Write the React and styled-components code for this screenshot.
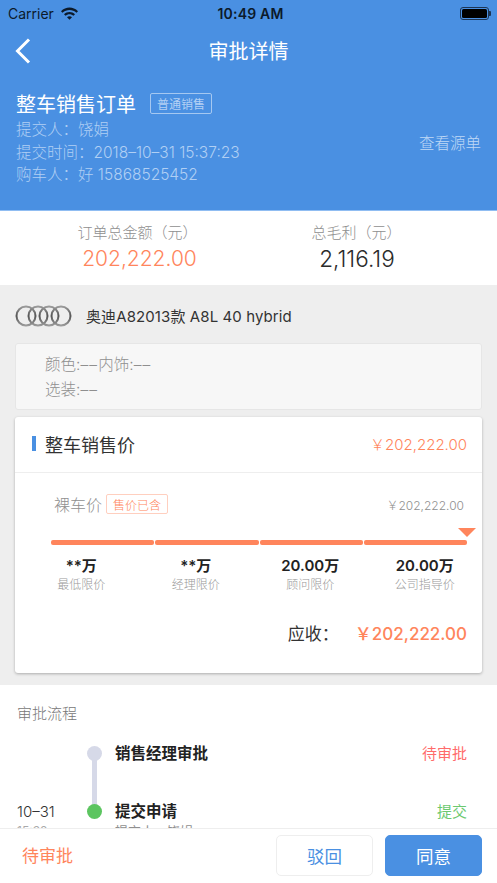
import styled, { createGlobalStyle } from 'styled-components';

const GlobalStyle = createGlobalStyle`
  html, body {
    margin: 0;
    padding: 0;
    background: #fff;
  }
  body {
    font-family: Inter, "Noto Sans CJK SC", sans-serif;
  }
  * {
    box-sizing: border-box;
  }
`;

const Page = styled.div`
  width: 497px;
  height: 883px;
  display: flex;
  flex-direction: column;
  overflow: hidden;
`;

const Header = styled.header`
  height: 211px;
  flex: none;
  background: #4a90e2;
  border-bottom: 1px solid #90bdf2;
  color: #fff;
`;

const StatusBar = styled.div`
  height: 26px;
  padding: 0 8px;
  display: grid;
  grid-template-columns: 1fr auto 1fr;
  align-items: center;
  color: #0c1a2b;
  font-size: 14px;
`;

const Carrier = styled.div`
  display: flex;
  align-items: center;
  gap: 7px;
`;

const Clock = styled.div`
  font-weight: 600;
  font-size: 14px;
  letter-spacing: 0.2px;
  margin-left: 4px;
`;

const Battery = styled.div`
  justify-self: end;
  width: 29px;
  height: 13px;
  border: 1px solid #1c3555;
  border-radius: 3px;
  padding: 1px;
  position: relative;

  &::before {
    content: '';
    display: block;
    height: 100%;
    background: #000;
    border-radius: 1.5px;
  }

  &::after {
    content: '';
    position: absolute;
    right: -3px;
    top: 3px;
    width: 2px;
    height: 5px;
    background: #1c3555;
    border-radius: 0 1px 1px 0;
  }
`;

const NavBar = styled.nav`
  height: 48px;
  display: flex;
  align-items: center;
  justify-content: center;
  position: relative;
`;

const BackIcon = styled.svg`
  position: absolute;
  left: 15px;
  top: 12px;
`;

const NavTitle = styled.h1`
  margin: 0;
  font-size: 20px;
  font-weight: 400;
`;

const OrderInfo = styled.div`
  padding: 16px 16px 0;
  display: flex;
  align-items: center;
  justify-content: space-between;
`;

const OrderTitleRow = styled.div`
  display: flex;
  align-items: center;
  gap: 14px;
  height: 26px;
  margin-bottom: 3px;
`;

const OrderTitle = styled.h2`
  margin: 0;
  font-size: 20px;
  font-weight: 400;
`;

const TypeTag = styled.span`
  height: 21px;
  padding: 0 6px;
  display: flex;
  align-items: center;
  border: 1px solid #a5c8f1;
  border-radius: 2px;
  font-size: 12px;
  color: #b4d1f4;
`;

const InfoLine = styled.div`
  font-size: 15.5px;
  font-weight: 300;
  line-height: 22.5px;
  color: #b0cff4;
`;

const SourceLink = styled.a`
  font-size: 15.5px;
  font-weight: 300;
  color: #c0d9f6;
  margin-top: 8px;
`;

const Stats = styled.section`
  height: 74px;
  flex: none;
  background: #fff;
  display: grid;
  grid-template-columns: 280px 1fr;
  padding: 10px 0 0 0;
`;

const Stat = styled.div`
  text-align: center;
  padding-right: ${({ $shift }) => $shift}px;
`;

const StatLabel = styled.div`
  font-size: 15px;
  font-weight: 300;
  line-height: 24px;
  color: #8f8f8f;
`;

const StatValue = styled.div`
  font-size: ${({ $accent }) => ($accent ? '21px' : '22.5px')};
  font-weight: 300;
  line-height: 28px;
  padding-left: ${({ $accent }) => ($accent ? '4px' : '1px')};
  color: ${({ $accent }) => ($accent ? '#ff855c' : '#2b2b2b')};
`;

const GreySection = styled.section`
  height: 400px;
  flex: none;
  background: #eee;
  padding: 0 15px;
`;

const CarRow = styled.div`
  height: 58px;
  display: flex;
  align-items: center;
  gap: 14px;
  padding-top: 3px;
  font-size: 15px;
  letter-spacing: 0.1px;
  color: #333;
`;

const OptionsCard = styled.div`
  height: 67px;
  background: #f7f7f7;
  border: 1px solid #e6e6e6;
  border-radius: 3px;
  padding: 8px 29px;
  font-size: 15.5px;
  font-weight: 300;
  line-height: 25px;
  color: #8f8f8f;
`;

const Blank = styled.span`
  letter-spacing: 1.2px;
`;

const PriceCard = styled.div`
  height: 256px;
  margin-top: 7px;
  background: #fff;
  border-radius: 3px;
  box-shadow: 0 1px 3px rgba(0, 0, 0, 0.28);
`;

const PriceHead = styled.div`
  height: 56px;
  padding: 0 15px 2px 17px;
  display: flex;
  align-items: center;
  justify-content: space-between;
  border-bottom: 1px solid #eee;
`;

const PriceHeadTitle = styled.div`
  display: flex;
  align-items: center;
  gap: 9px;
  font-size: 18px;
  color: #333;

  &::before {
    content: '';
    width: 4px;
    height: 15px;
    background: #4a90e2;
  }
`;

const PriceHeadValue = styled.div`
  font-size: 15px;
  font-weight: 300;
  color: #ff855c;
`;

const PriceBody = styled.div`
  padding: 18px 15px 0 36px;
`;

const BareRow = styled.div`
  height: 26px;
  padding: 0 3px;
  display: flex;
  align-items: center;
  gap: 4px;
`;

const BareLabel = styled.span`
  font-size: 16px;
  font-weight: 300;
  color: #8f8f8f;
`;

const IncludedTag = styled.span`
  height: 20px;
  padding: 0 6px;
  display: flex;
  align-items: center;
  border: 1px solid #ffcfbf;
  border-radius: 2px;
  font-size: 12px;
  font-weight: 300;
  color: #ff855c;
`;

const BareValue = styled.span`
  margin-left: auto;
  font-size: 12px;
  font-weight: 300;
  color: #8f8f8f;
`;

const Track = styled.div`
  position: relative;
  margin-top: 23px;
  display: grid;
  grid-template-columns: repeat(4, 1fr);
  gap: 1px;

  &::after {
    content: '';
    position: absolute;
    right: -9px;
    top: -12px;
    border-left: 9px solid transparent;
    border-right: 9px solid transparent;
    border-top: 9px solid #ff855c;
  }
`;

const Segment = styled.div`
  height: 5px;
  border-radius: 2px;
  background: #ff855c;
`;

const Limits = styled.div`
  margin: 11px -15px 0 -27px;
  display: grid;
  grid-template-columns: repeat(4, 1fr);
  text-align: center;
`;

const LimitValue = styled.div`
  font-size: 15px;
  line-height: 20px;
  font-weight: 600;
  color: #222;
`;

const LimitLabel = styled.div`
  font-size: 12px;
  font-weight: 300;
  line-height: 18px;
  color: #999;
`;

const DueRow = styled.div`
  margin-top: 26px;
  display: flex;
  justify-content: flex-end;
  align-items: center;
  gap: 16px;
`;

const DueLabel = styled.span`
  font-size: 17px;
  color: #333;
`;

const DueValue = styled.span`
  font-size: 17px;
  font-weight: 500;
  color: #ff855c;
`;

const FlowSection = styled.section`
  flex: 1;
  min-height: 0;
  overflow: hidden;
  background: #fff;
  padding: 18px 30px 0 17px;
`;

const FlowTitle = styled.div`
  font-size: 15px;
  font-weight: 300;
  line-height: 22px;
  color: #777;
  margin-bottom: 20px;
`;

const Step = styled.div`
  display: grid;
  grid-template-columns: 58px 18px 1fr auto;
  column-gap: 12px;
  height: 58px;
  position: relative;
`;

const StepDate = styled.div`
  font-size: 15px;
  font-weight: 300;
  line-height: 18px;
  color: #333;
`;

const StepTime = styled.div`
  font-size: 12px;
  line-height: 20px;
  color: #aaa;
`;

const Dot = styled.div`
  width: 15px;
  height: 15px;
  border-radius: 50%;
  margin-top: 1px;
  background: ${({ $color }) => $color};
  z-index: 1;
`;

const StepLine = styled.div`
  position: absolute;
  left: 75px;
  top: 10px;
  width: 5px;
  height: 58px;
  background: #d6d9e8;
`;

const StepName = styled.div`
  font-size: 15.5px;
  line-height: 18px;
  font-weight: 600;
  color: #222;
  margin-left: -2px;
`;

const StepSub = styled.div`
  font-size: 13px;
  line-height: 20px;
  font-weight: 400;
  color: #8f8f8f;
`;

const StepStatus = styled.div`
  font-size: 15px;
  line-height: 18px;
  color: ${({ $color }) => $color};
`;

const BottomBar = styled.footer`
  height: 55px;
  flex: none;
  background: #fff;
  border-top: 1px solid #eee;
  padding: 6px 15px 0 22px;
  display: flex;
  align-items: flex-start;
  gap: 12px;
`;

const BottomStatus = styled.div`
  flex: 1;
  font-size: 17px;
  line-height: 42px;
  color: #ff855c;
`;

const ActionButton = styled.button`
  width: 97px;
  height: 41px;
  border-radius: 5px;
  border: 1px solid ${({ $primary }) => ($primary ? '#4a90e2' : '#eee')};
  background: ${({ $primary }) => ($primary ? '#4a90e2' : '#fff')};
  color: ${({ $primary }) => ($primary ? '#fff' : '#4a90e2')};
  font-family: inherit;
  font-size: 17.5px;
  padding: 0;
`;

const limits = [
  { value: '**万', label: '最低限价' },
  { value: '**万', label: '经理限价' },
  { value: '20.00万', label: '顾问限价' },
  { value: '20.00万', label: '公司指导价' },
];

function AudiLogo() {
  return (
    <svg width="57" height="22" viewBox="0 0 57 22" fill="none" stroke="url(#rings)" strokeWidth="2">
      <defs>
        <linearGradient id="rings" x1="0" y1="0" x2="0" y2="1">
          <stop offset="0" stopColor="#999" />
          <stop offset="0.5" stopColor="#555" />
          <stop offset="1" stopColor="#999" />
        </linearGradient>
      </defs>
      <circle cx="11" cy="11" r="9.5" />
      <circle cx="23" cy="11" r="9.5" />
      <circle cx="34" cy="11" r="9.5" />
      <circle cx="46" cy="11" r="9.5" />
    </svg>
  );
}

export default function App() {
  return (
    <Page>
      <GlobalStyle />
      <Header>
        <StatusBar>
          <Carrier>
            Carrier
            <svg width="17" height="13" viewBox="0 0 17 13" fill="#0c1a2b">
              <path d="M0 4.2C4.7-.6 12.3-.6 17 4.2l-1.5 1.6C11.6 2 5.4 2 1.5 5.8z" />
              <path d="M3 7.2c3-3 8-3 11 0l-1.5 1.6c-2.2-2.1-5.8-2.1-8 0z" />
              <path d="M6 10.2c1.4-1.3 3.6-1.3 5 0l-2.5 2.6z" />
            </svg>
          </Carrier>
          <Clock>10:49 AM</Clock>
          <Battery />
        </StatusBar>
        <NavBar>
          <BackIcon width="16" height="26" viewBox="0 0 16 26" fill="none" stroke="#fff" strokeWidth="3">
            <path d="M14 1.5 2.5 13 14 24.5" />
          </BackIcon>
          <NavTitle>审批详情</NavTitle>
        </NavBar>
        <OrderInfo>
          <div>
            <OrderTitleRow>
              <OrderTitle>整车销售订单</OrderTitle>
              <TypeTag>普通销售</TypeTag>
            </OrderTitleRow>
            <InfoLine>提交人：饶娟</InfoLine>
            <InfoLine>提交时间：2018–10–31 15:37:23</InfoLine>
            <InfoLine>购车人：好 15868525452</InfoLine>
          </div>
          <SourceLink>查看源单</SourceLink>
        </OrderInfo>
      </Header>

      <Stats>
        <Stat $shift={5}>
          <StatLabel>订单总金额（元）</StatLabel>
          <StatValue $accent>202,222.00</StatValue>
        </Stat>
        <Stat $shift={64}>
          <StatLabel>总毛利（元）</StatLabel>
          <StatValue>2,116.19</StatValue>
        </Stat>
      </Stats>

      <GreySection>
        <CarRow>
          <AudiLogo />
          奥迪A82013款 A8L 40 hybrid
        </CarRow>
        <OptionsCard>
          <div>
            颜色:<Blank>––</Blank>内饰:<Blank>––</Blank>
          </div>
          <div>
            选装:<Blank>––</Blank>
          </div>
        </OptionsCard>
        <PriceCard>
          <PriceHead>
            <PriceHeadTitle>整车销售价</PriceHeadTitle>
            <PriceHeadValue>￥202,222.00</PriceHeadValue>
          </PriceHead>
          <PriceBody>
            <BareRow>
              <BareLabel>裸车价</BareLabel>
              <IncludedTag>售价已含</IncludedTag>
              <BareValue>￥202,222.00</BareValue>
            </BareRow>
            <Track>
              {limits.map((item) => (
                <Segment key={item.label} />
              ))}
            </Track>
            <Limits>
              {limits.map((item) => (
                <div key={item.label}>
                  <LimitValue>{item.value}</LimitValue>
                  <LimitLabel>{item.label}</LimitLabel>
                </div>
              ))}
            </Limits>
            <DueRow>
              <DueLabel>应收：</DueLabel>
              <DueValue>￥202,222.00</DueValue>
            </DueRow>
          </PriceBody>
        </PriceCard>
      </GreySection>

      <FlowSection>
        <FlowTitle>审批流程</FlowTitle>
        <Step>
          <div />
          <Dot $color="#d6d9e8" />
          <StepName>销售经理审批</StepName>
          <StepStatus $color="#ff6b6b">待审批</StepStatus>
          <StepLine />
        </Step>
        <Step>
          <div>
            <StepDate>10–31</StepDate>
            <StepTime>15:38</StepTime>
          </div>
          <Dot $color="#5cc560" />
          <StepName>
            提交申请
            <StepSub>提交人：饶娟</StepSub>
          </StepName>
          <StepStatus $color="#6cc96f">提交</StepStatus>
        </Step>
      </FlowSection>

      <BottomBar>
        <BottomStatus>待审批</BottomStatus>
        <ActionButton>驳回</ActionButton>
        <ActionButton $primary>同意</ActionButton>
      </BottomBar>
    </Page>
  );
}
